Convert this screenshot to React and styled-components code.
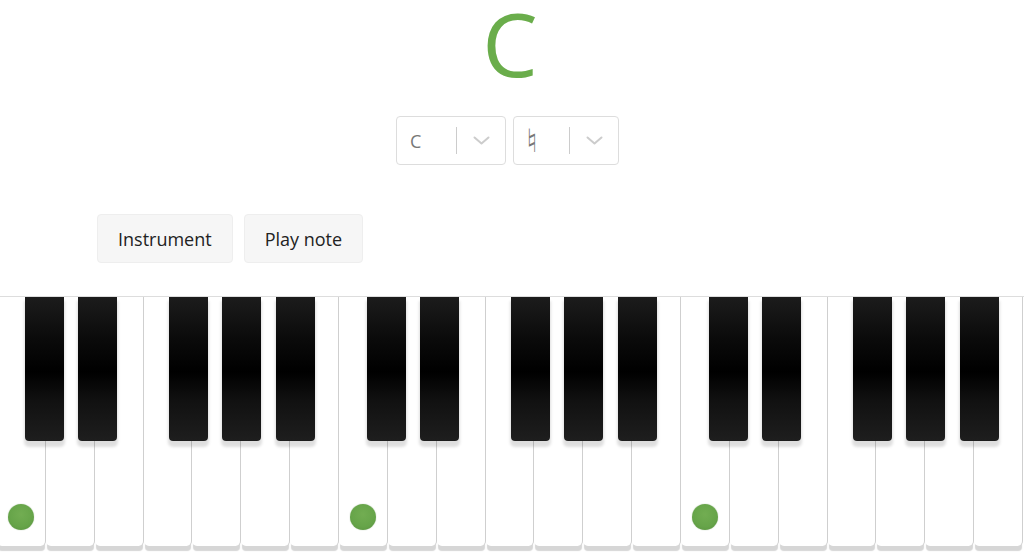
import React from 'react'
import styled, { createGlobalStyle } from 'styled-components'

const GlobalStyle = createGlobalStyle`
  html, body {
    margin: 0;
    padding: 0;
    background: #fff;
    overflow: hidden;
  }
  body {
    font-family: "Open Sans", "DejaVu Sans", sans-serif;
  }
`

const Page = styled.div`
  display: flex;
  flex-direction: column;
  width: 1024px;
  height: 555px;
  overflow: hidden;
`

const Title = styled.div`
  margin-top: -1px;
  font-size: 88px;
  line-height: 88px;
  color: #6aad4b;
  text-align: center;
  padding-right: 4px;
`

const SelectRow = styled.div`
  display: flex;
  justify-content: center;
  gap: 7px;
  margin-top: 29px;
  padding-right: 9px;
`

const Select = styled.div`
  display: flex;
  align-items: center;
  box-sizing: border-box;
  width: ${p => p.$width}px;
  height: 49px;
  border: 1px solid #ddd;
  border-radius: 4px;
  background: #fff;
`

const Value = styled.div`
  flex: 1;
  padding-left: ${p => p.$symbol ? 12 : 13}px;
  font-size: ${p => p.$symbol ? 32 : 18}px;
  line-height: 24px;
  color: #777;
  font-family: ${p => p.$symbol ? '"DejaVu Sans", sans-serif' : '"Open Sans", sans-serif'};
`

const Separator = styled.span`
  align-self: stretch;
  width: 1px;
  margin: 10px 0;
  background: #ccc;
`

const Indicator = styled.div`
  display: flex;
  align-items: center;
  padding: 0 15px 0 16px;
  color: #ccc;
`

const ButtonRow = styled.div`
  display: flex;
  gap: 11px;
  margin-top: 49px;
  padding-left: 97px;
`

const Button = styled.button`
  box-sizing: border-box;
  height: 49px;
  padding: 0 20px;
  border: 1px solid #eee;
  border-radius: 4px;
  background: #f6f6f6;
  color: #222;
  font-family: "Open Sans", sans-serif;
  font-size: 18px;
`

const PianoFrame = styled.div`
  margin-top: 33px;
  border-top: 1px solid #ddd;
  flex: 1;
  overflow: hidden;
`

const Keyboard = styled.div`
  position: relative;
  display: flex;
  width: 1026px;
  margin-left: -3px;
`

const WhiteKey = styled.div`
  position: relative;
  box-sizing: border-box;
  flex: 1;
  height: 249px;
  border-right: 1px solid #cfcfcf;
  border-radius: 0 0 5px 5px;
  background: #fff;
  box-shadow: 0 6px 1px -1px #d6d6d6;
`

const Dot = styled.span`
  position: absolute;
  left: 50%;
  bottom: 16px;
  width: 26px;
  height: 26px;
  margin-left: -13px;
  border-radius: 50%;
  background: radial-gradient(circle at 50% 40%, #72ad52 0%, #66a449 60%, #578f3e 100%);
  box-shadow: 0 0 1px rgba(60, 110, 40, 0.6);
`

const BlackKey = styled.div`
  position: absolute;
  top: 0;
  width: 38.5px;
  height: 144px;
  border-radius: 0 0 4px 4px;
  background: linear-gradient(to bottom, #1c1c1c 0%, #0a0a0a 30%, #000 52%, #111 72%, #1e1e1e 100%);
  box-shadow: 0 5px 3px 1px rgba(0, 0, 0, 0.13);
`

const Chevron = () => (
  <svg width="17" height="9" viewBox="0 0 17 9" fill="none">
    <polyline points="1.5,1.5 8.5,7.5 15.5,1.5" stroke="currentColor" strokeWidth="2" strokeLinecap="round" strokeLinejoin="round" />
  </svg>
)

const KEY = 1026 / 21
const OCTAVE = KEY * 7
const BLACK_OFFSETS = [28.4, 81.4, 172.4, 225.4, 279.4]

export default function App () {
  const whites = Array.from({ length: 21 }, (_, i) => i)
  const blacks = []
  for (let o = 0; o < 3; o++) {
    BLACK_OFFSETS.forEach((off, j) => blacks.push({ id: `${o}-${j}`, left: o * OCTAVE + off }))
  }

  return (
    <Page>
      <GlobalStyle />
      <Title>C</Title>
      <SelectRow>
        <Select $width={110}>
          <Value>C</Value>
          <Separator />
          <Indicator><Chevron /></Indicator>
        </Select>
        <Select $width={106}>
          <Value $symbol>{'\u266E\uFE0E'}</Value>
          <Separator />
          <Indicator><Chevron /></Indicator>
        </Select>
      </SelectRow>
      <ButtonRow>
        <Button>Instrument</Button>
        <Button>Play note</Button>
      </ButtonRow>
      <PianoFrame>
        <Keyboard>
          {whites.map(i => (
            <WhiteKey key={i}>
              {i % 7 === 0 && <Dot />}
            </WhiteKey>
          ))}
          {blacks.map(b => <BlackKey key={b.id} style={{ left: b.left }} />)}
        </Keyboard>
      </PianoFrame>
    </Page>
  )
}
